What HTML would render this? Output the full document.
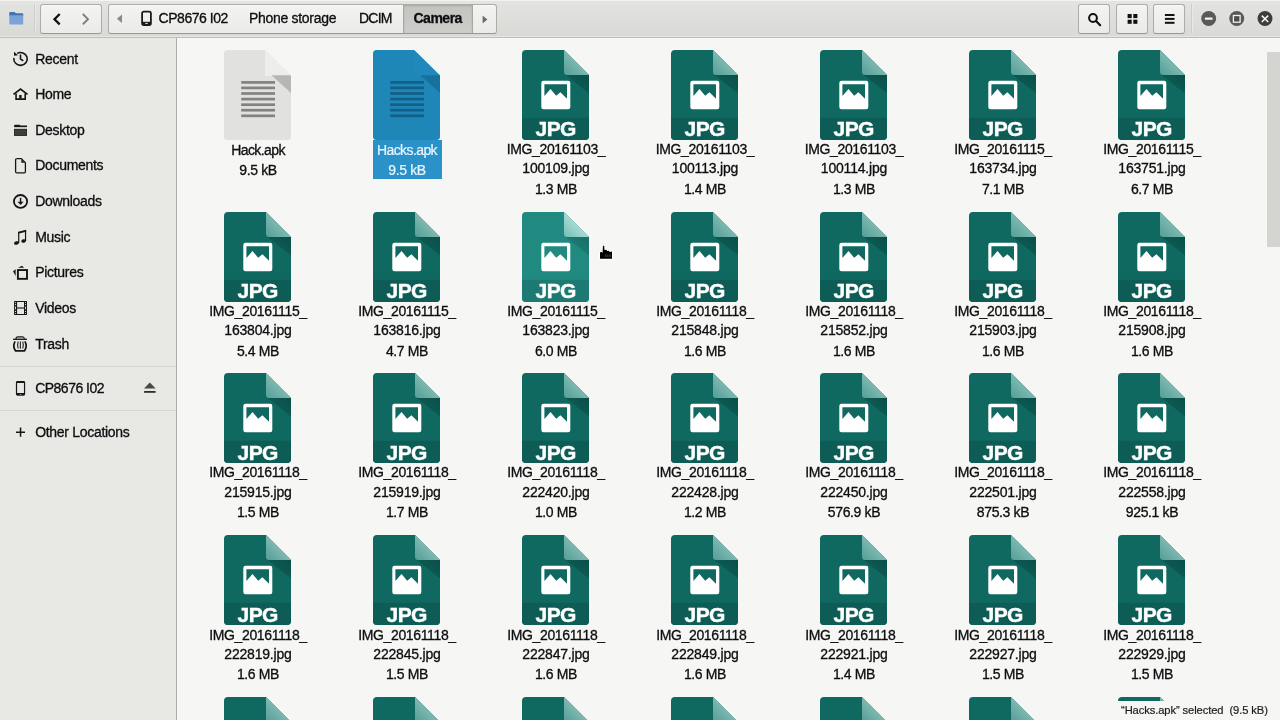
<!DOCTYPE html>
<html lang="en">
<head>
<meta charset="utf-8">
<title>Camera</title>
<style>
html,body{margin:0;padding:0;}
body{width:1280px;height:720px;overflow:hidden;background:#f6f6f4;font-family:"Liberation Sans","DejaVu Sans",sans-serif;color:#1c1c1c;}
#win{will-change:transform;position:relative;width:1280px;height:720px;overflow:hidden;}
#header{position:absolute;left:0;top:0;width:1280px;height:37px;background:linear-gradient(#e4e5e2,#dededc 50%,#d9d9d5);border-bottom:1px solid #bdbdb9;box-shadow:inset 0 1px 0 #f3f3f1, inset 0 -1px 0 #e6e6e3;}
.hbtn{position:absolute;top:4px;height:28px;border:1px solid #adada8;border-bottom-color:#989893;box-shadow:inset 0 1px 0 #fafaf9;border-radius:3px;background:linear-gradient(#f3f3f1,#ebebe9);box-sizing:content-box;}
.hsep{position:absolute;top:4px;height:29px;width:1px;background:#cdcdc9;box-shadow:1px 0 0 #e9e9e7;}
.ptxt{position:absolute;top:-1px;height:28px;line-height:28px;font-size:14px;letter-spacing:-0.3px;color:#2e3436;white-space:nowrap;}
#sidebar{position:absolute;left:0;top:38px;width:176px;height:682px;background:#e8e8e4;border-right:1px solid #adada9;}
.srow{position:absolute;left:0;width:176px;height:24px;margin-top:-38px;}
.sic{position:absolute;left:13px;top:4.500px;width:15px;height:15px;display:block;}
.sic svg{display:block;}
.slb{position:absolute;left:35.200px;top:0;height:24px;line-height:24px;font-size:14px;letter-spacing:-0.3px;color:#1e2224;white-space:nowrap;}
.eject{position:absolute;left:142px;top:4.500px;width:15px;height:15px;}
.eject svg{display:block;}
.ssep{position:absolute;left:0;width:176px;height:1px;background:#d5d5d1;margin-top:-38px;}
#content{position:absolute;left:177px;top:38px;width:1103px;height:682px;background:#f6f6f4;overflow:hidden;}
.item{position:absolute;width:150px;margin-left:-177px;margin-top:-38px;}
.ico{position:relative;width:67px;height:90px;margin:0 auto;left:-0.300px;}
.ico svg{display:block;}
.ext{position:absolute;left:0;width:67px;text-align:center;top:68.500px;font-size:21px;line-height:21px;font-weight:bold;color:#fdfffe;letter-spacing:-0.6px;-webkit-text-stroke:0.4px #fdfffe;}
.lab{position:absolute;top:0;left:0;width:150px;height:0;text-align:center;font-size:14px;line-height:16px;letter-spacing:-0.36px;color:#141617;}
.lab span{position:absolute;left:0;width:150px;display:block;white-space:nowrap;height:16px;}
.lab span.l2{letter-spacing:-0.2px;}

.docsel .lab{color:#e9f6ff;}
.docsel .hl{position:absolute;left:41px;top:90.300px;width:69px;height:39px;background:#2a92c8;}
.doc .lab span:first-child,.docsel .lab span:first-child{letter-spacing:-0.6px;}

#sbar{position:absolute;left:1090px;top:14px;width:13px;height:195.300px;background:#d4d4d0;}
#cursor{position:absolute;left:419px;top:204px;}
#status{position:absolute;right:0;bottom:0;width:163px;height:19px;background:#f6f6f4;font-size:11.200px;line-height:19px;text-align:left;text-indent:4px;letter-spacing:-0.1px;color:#1c1e1f;white-space:nowrap;}
.lab,.slb,.ptxt{-webkit-text-stroke:0.3px currentColor;color:#0c0e0f;}
.docsel .lab{-webkit-text-stroke:0.2px currentColor;color:#eaf6ff;}
#status{-webkit-text-stroke:0.2px currentColor;}

</style>
</head>
<body>
<svg width="0" height="0" style="position:absolute">
<defs>
<linearGradient id="ijpgfg" x1="0" y1="1" x2="1" y2="0"><stop offset="0" stop-color="#549e96"/><stop offset="0.5" stop-color="#7cb8b0"/></linearGradient>
<linearGradient id="ijpgsg" gradientUnits="userSpaceOnUse" x1="67" y1="25" x2="57.5" y2="37"><stop offset="0" stop-color="#0a4f49" stop-opacity="1"/><stop offset="1" stop-color="#0a4f49" stop-opacity="0.6"/></linearGradient>
<clipPath id="ijpgcp"><path d="M4 0 H42 L67 25 V86 Q67 90 63 90 H4 Q0 90 0 86 V4 Q0 0 4 0 Z"/></clipPath>
<symbol id="ijpg" viewBox="0 0 67 90">
<g clip-path="url(#ijpgcp)">
<rect x="0" y="0" width="67" height="90" fill="#106960"/>
<rect x="0" y="67.800" width="67" height="22.200" fill="#0d5c55"/>
<path d="M43.500 25 H67 V43.500 Z" fill="url(#ijpgsg)"/>
<path d="M42 0 V22 Q42 25 45 25 H67 Z" fill="url(#ijpgfg)"/>
</g>
<rect x="19.300" y="30.700" width="29" height="28.600" rx="2.200" fill="#fff"/>
<path d="M22.400 34.300 H45 V48.700 L38.400 42.300 L34.200 45.800 L28.500 39 L22.400 46 Z" fill="#106960"/>
</symbol><linearGradient id="ijpghfg" x1="0" y1="1" x2="1" y2="0"><stop offset="0" stop-color="#74bcb4"/><stop offset="0.5" stop-color="#a4dcd4"/></linearGradient>
<linearGradient id="ijpghsg" gradientUnits="userSpaceOnUse" x1="67" y1="25" x2="57.5" y2="37"><stop offset="0" stop-color="#176f68" stop-opacity="1"/><stop offset="1" stop-color="#176f68" stop-opacity="0.6"/></linearGradient>
<clipPath id="ijpghcp"><path d="M4 0 H42 L67 25 V86 Q67 90 63 90 H4 Q0 90 0 86 V4 Q0 0 4 0 Z"/></clipPath>
<symbol id="ijpgh" viewBox="0 0 67 90">
<g clip-path="url(#ijpghcp)">
<rect x="0" y="0" width="67" height="90" fill="#218a80"/>
<rect x="0" y="67.800" width="67" height="22.200" fill="#1d7a72"/>
<path d="M43.500 25 H67 V43.500 Z" fill="url(#ijpghsg)"/>
<path d="M42 0 V22 Q42 25 45 25 H67 Z" fill="url(#ijpghfg)"/>
</g>
<rect x="19.300" y="30.700" width="29" height="28.600" rx="2.200" fill="#fff"/>
<path d="M22.400 34.300 H45 V48.700 L38.400 42.300 L34.200 45.800 L28.500 39 L22.400 46 Z" fill="#218a80"/>
</symbol><clipPath id="idoccp"><path d="M3.500 0 H41 L67 25.500 V86.500 Q67 90 63.500 90 H3.500 Q0 90 0 86.500 V3.500 Q0 0 3.500 0 Z"/></clipPath>
<symbol id="idoc" viewBox="0 0 67 90">
<g clip-path="url(#idoccp)">
<rect x="0" y="0" width="67" height="90" fill="#e1e1df"/>
<path d="M41 0 H42 L67 25 V26 H41 Z" fill="#ededeb"/>
<path d="M47.500 25.200 H67 V43 Z" fill="#b6b6b4"/>
</g>
<rect x="17.200" y="31.05" width="33.800" height="2.700" fill="#82827e"/><rect x="17.200" y="36.55" width="33.800" height="2.700" fill="#82827e"/><rect x="17.200" y="42.15" width="33.800" height="2.700" fill="#82827e"/><rect x="17.200" y="47.75" width="33.800" height="2.700" fill="#82827e"/><rect x="17.200" y="53.35" width="33.800" height="2.700" fill="#82827e"/><rect x="17.200" y="58.85" width="33.800" height="2.700" fill="#82827e"/><rect x="17.200" y="64.45" width="33.800" height="2.700" fill="#82827e"/>
</symbol><clipPath id="idocscp"><path d="M3.500 0 H41 L67 25.500 V86.500 Q67 90 63.500 90 H3.500 Q0 90 0 86.500 V3.500 Q0 0 3.500 0 Z"/></clipPath>
<symbol id="idocs" viewBox="0 0 67 90">
<g clip-path="url(#idocscp)">
<rect x="0" y="0" width="67" height="90" fill="#1f86b8"/>
<path d="M41 0 H42 L67 25 V26 H41 Z" fill="#2088bb"/>
<path d="M47.500 25.200 H67 V43 Z" fill="#18709c"/>
</g>
<rect x="17.200" y="31.05" width="33.800" height="2.700" fill="#135f88"/><rect x="17.200" y="36.55" width="33.800" height="2.700" fill="#135f88"/><rect x="17.200" y="42.15" width="33.800" height="2.700" fill="#135f88"/><rect x="17.200" y="47.75" width="33.800" height="2.700" fill="#135f88"/><rect x="17.200" y="53.35" width="33.800" height="2.700" fill="#135f88"/><rect x="17.200" y="58.85" width="33.800" height="2.700" fill="#135f88"/><rect x="17.200" y="64.45" width="33.800" height="2.700" fill="#135f88"/>
</symbol>
</defs>
</svg>
<div id="win">
<div id="header">
<div style="position:absolute;left:9px;top:11px;width:15px;height:15px"><svg width="15" height="15" viewBox="0 0 15 15"><path d="M0.300 1.800 Q0.300 1 1.100 1 H5.600 L6.800 2.200 H13.400 Q14.200 2.200 14.200 3 V5 H0.300 Z" fill="#4471b0"/><rect x="0.300" y="4" width="13.900" height="9.600" rx="0.800" fill="#7aa4d8"/><rect x="0.300" y="4" width="13.900" height="1.200" fill="#6a96cf"/></svg></div>
<div class="hsep" style="left:34px"></div>
<div class="hbtn" style="left:40px;width:60px">
<svg width="60" height="28" viewBox="0 0 60 28" style="display:block"><path d="M18.700 9 L13.500 14.200 L18.700 19.400" fill="none" stroke="#111" stroke-width="2.300"/><path d="M41.800 9 L47 14.200 L41.800 19.400" fill="none" stroke="#7c7e7c" stroke-width="1.900"/></svg>
</div>
<div class="hbtn" style="left:108px;width:387px;overflow:hidden">
<svg width="20" height="28" viewBox="0 0 20 28" style="position:absolute;left:0;top:0"><path d="M13 9.400 V18.100 L7.800 13.750 Z" fill="#8a8c8a"/></svg>
<svg width="15" height="17" viewBox="0 0 15 17" style="position:absolute;left:29.800px;top:4.600px"><rect x="3.100" y="1.600" width="8.800" height="13.400" rx="1.800" fill="none" stroke="#1a1a1a" stroke-width="1.800"/><rect x="3.100" y="11.800" width="8.800" height="3.200" fill="#1a1a1a"/><rect x="6.300" y="12.900" width="2.400" height="1" fill="#eee"/></svg>
<span class="ptxt" style="left:49.500px;letter-spacing:-0.45px">CP8676 I02</span>
<span class="ptxt" style="left:140px">Phone storage</span>
<span class="ptxt" style="left:250px;letter-spacing:-0.75px">DCIM</span>
<div style="position:absolute;left:294px;top:0;width:68px;height:28px;background:linear-gradient(#c3c3bf,#cdcdc9);border-left:1px solid #a8a8a2;border-right:1px solid #a8a8a2;box-shadow:inset 0 1px 2px rgba(0,0,0,0.14)"></div>
<span class="ptxt" style="left:304.500px;font-weight:bold;letter-spacing:-0.5px">Camera</span>
<svg width="20" height="28" viewBox="0 0 20 28" style="position:absolute;left:366px;top:0"><path d="M7.600 10.500 V18.500 L12.400 14.500 Z" fill="#6a6c6a"/></svg>
</div>
<div class="hbtn" style="left:1078px;width:30px"><svg width="29" height="28" viewBox="0 0 29 28" style="display:block;margin-left:1px"><circle cx="13" cy="13" r="3.900" fill="none" stroke="#111" stroke-width="2"/><path d="M16 16 L20.200 20.200" stroke="#111" stroke-width="2.200" stroke-linecap="round"/></svg></div>
<div class="hbtn" style="left:1116px;width:30px"><svg width="29" height="28" viewBox="0 0 29 28" style="display:block;margin-left:1px"><rect x="9.600" y="9" width="4.100" height="4.100" fill="#111"/><rect x="15.300" y="9" width="4.100" height="4.100" fill="#111"/><rect x="9.600" y="14.700" width="4.100" height="4.100" fill="#111"/><rect x="15.300" y="14.700" width="4.100" height="4.100" fill="#111"/></svg></div>
<div class="hbtn" style="left:1153px;width:30px"><svg width="29" height="28" viewBox="0 0 29 28" style="display:block;margin-left:1px"><rect x="9.900" y="9" width="9.600" height="2" fill="#111"/><rect x="9.900" y="12.900" width="9.600" height="2" fill="#111"/><rect x="9.900" y="16.800" width="9.600" height="2" fill="#111"/></svg></div>
<div class="hsep" style="left:1191px"></div>
<svg width="90" height="36" viewBox="0 0 90 36" style="position:absolute;left:1190px;top:0">
<circle cx="18.700" cy="18.500" r="7.450" fill="#585a58"/><rect x="14.900" y="17.500" width="7.700" height="2.300" rx="0.500" fill="#f2f2f2"/>
<circle cx="46.750" cy="18.500" r="7.450" fill="#585a58"/><rect x="43.400" y="15.500" width="6.700" height="6.700" fill="#4c4e4c" stroke="#f2f2f2" stroke-width="1.300"/>
<circle cx="75" cy="18.500" r="7.450" fill="#3c3e3c"/><path d="M71.800 15.600 L78.200 22 M78.200 15.600 L71.800 22" stroke="#f6f6f6" stroke-width="1.500"/>
</svg>
</div>
<div id="sidebar">
<div class="srow" style="top:46.5px"><span class="slb">Recent</span></div>
<div class="srow" style="top:82.1px"><span class="slb">Home</span></div>
<div class="srow" style="top:117.8px"><span class="slb">Desktop</span></div>
<div class="srow" style="top:153.4px"><span class="slb">Documents</span></div>
<div class="srow" style="top:189.0px"><span class="slb">Downloads</span></div>
<div class="srow" style="top:224.7px"><span class="slb">Music</span></div>
<div class="srow" style="top:260.3px"><span class="slb">Pictures</span></div>
<div class="srow" style="top:295.9px"><span class="slb">Videos</span></div>
<div class="srow" style="top:331.6px"><span class="slb">Trash</span></div>
<div class="srow" style="top:375.7px"><span class="slb" style="letter-spacing:-0.52px">CP8676 I02</span></div>
<div class="srow" style="top:419.8px"><span class="slb">Other Locations</span></div>
<div class="ssep" style="top:365.5px"></div>
<div class="ssep" style="top:409.8px"></div>
</div>
<div id="content">
<div class="item doc" style="left:183px;top:49.7px"><div class="ico"><svg width="67" height="90" viewBox="0 0 67 90"><use href="#idoc"/></svg></div><div class="lab"><span class="ln" style="top:92.3px">Hack.apk</span><span class="ln sz" style="top:112.3px">9.5 kB</span></div></div>
<div class="item docsel" style="left:332px;top:49.7px"><div class="hl"></div><div class="ico"><svg width="67" height="90" viewBox="0 0 67 90"><use href="#idocs"/></svg></div><div class="lab"><span class="ln" style="top:92.3px">Hacks.apk</span><span class="ln sz" style="top:112.3px">9.5 kB</span></div></div>
<div class="item jpg" style="left:481px;top:49.7px"><div class="ico"><svg width="67" height="90" viewBox="0 0 67 90"><use href="#ijpg"/></svg><span class="ext">JPG</span></div><div class="lab"><span class="ln" style="top:91.3px">IMG_20161103_</span><span class="ln l2" style="top:110.3px">100109.jpg</span><span class="ln sz" style="top:131.3px">1.3 MB</span></div></div>
<div class="item jpg" style="left:630px;top:49.7px"><div class="ico"><svg width="67" height="90" viewBox="0 0 67 90"><use href="#ijpg"/></svg><span class="ext">JPG</span></div><div class="lab"><span class="ln" style="top:91.3px">IMG_20161103_</span><span class="ln l2" style="top:110.3px">100113.jpg</span><span class="ln sz" style="top:131.3px">1.4 MB</span></div></div>
<div class="item jpg" style="left:779px;top:49.7px"><div class="ico"><svg width="67" height="90" viewBox="0 0 67 90"><use href="#ijpg"/></svg><span class="ext">JPG</span></div><div class="lab"><span class="ln" style="top:91.3px">IMG_20161103_</span><span class="ln l2" style="top:110.3px">100114.jpg</span><span class="ln sz" style="top:131.3px">1.3 MB</span></div></div>
<div class="item jpg" style="left:928px;top:49.7px"><div class="ico"><svg width="67" height="90" viewBox="0 0 67 90"><use href="#ijpg"/></svg><span class="ext">JPG</span></div><div class="lab"><span class="ln" style="top:91.3px">IMG_20161115_</span><span class="ln l2" style="top:110.3px">163734.jpg</span><span class="ln sz" style="top:131.3px">7.1 MB</span></div></div>
<div class="item jpg" style="left:1077px;top:49.7px"><div class="ico"><svg width="67" height="90" viewBox="0 0 67 90"><use href="#ijpg"/></svg><span class="ext">JPG</span></div><div class="lab"><span class="ln" style="top:91.3px">IMG_20161115_</span><span class="ln l2" style="top:110.3px">163751.jpg</span><span class="ln sz" style="top:131.3px">6.7 MB</span></div></div>
<div class="item jpg" style="left:183px;top:211.6px"><div class="ico"><svg width="67" height="90" viewBox="0 0 67 90"><use href="#ijpg"/></svg><span class="ext">JPG</span></div><div class="lab"><span class="ln" style="top:91.4px">IMG_20161115_</span><span class="ln l2" style="top:110.4px">163804.jpg</span><span class="ln sz" style="top:131.4px">5.4 MB</span></div></div>
<div class="item jpg" style="left:332px;top:211.6px"><div class="ico"><svg width="67" height="90" viewBox="0 0 67 90"><use href="#ijpg"/></svg><span class="ext">JPG</span></div><div class="lab"><span class="ln" style="top:91.4px">IMG_20161115_</span><span class="ln l2" style="top:110.4px">163816.jpg</span><span class="ln sz" style="top:131.4px">4.7 MB</span></div></div>
<div class="item jpghover" style="left:481px;top:211.6px"><div class="ico"><svg width="67" height="90" viewBox="0 0 67 90"><use href="#ijpgh"/></svg><span class="ext">JPG</span></div><div class="lab"><span class="ln" style="top:91.4px">IMG_20161115_</span><span class="ln l2" style="top:110.4px">163823.jpg</span><span class="ln sz" style="top:131.4px">6.0 MB</span></div></div>
<div class="item jpg" style="left:630px;top:211.6px"><div class="ico"><svg width="67" height="90" viewBox="0 0 67 90"><use href="#ijpg"/></svg><span class="ext">JPG</span></div><div class="lab"><span class="ln" style="top:91.4px">IMG_20161118_</span><span class="ln l2" style="top:110.4px">215848.jpg</span><span class="ln sz" style="top:131.4px">1.6 MB</span></div></div>
<div class="item jpg" style="left:779px;top:211.6px"><div class="ico"><svg width="67" height="90" viewBox="0 0 67 90"><use href="#ijpg"/></svg><span class="ext">JPG</span></div><div class="lab"><span class="ln" style="top:91.4px">IMG_20161118_</span><span class="ln l2" style="top:110.4px">215852.jpg</span><span class="ln sz" style="top:131.4px">1.6 MB</span></div></div>
<div class="item jpg" style="left:928px;top:211.6px"><div class="ico"><svg width="67" height="90" viewBox="0 0 67 90"><use href="#ijpg"/></svg><span class="ext">JPG</span></div><div class="lab"><span class="ln" style="top:91.4px">IMG_20161118_</span><span class="ln l2" style="top:110.4px">215903.jpg</span><span class="ln sz" style="top:131.4px">1.6 MB</span></div></div>
<div class="item jpg" style="left:1077px;top:211.6px"><div class="ico"><svg width="67" height="90" viewBox="0 0 67 90"><use href="#ijpg"/></svg><span class="ext">JPG</span></div><div class="lab"><span class="ln" style="top:91.4px">IMG_20161118_</span><span class="ln l2" style="top:110.4px">215908.jpg</span><span class="ln sz" style="top:131.4px">1.6 MB</span></div></div>
<div class="item jpg" style="left:183px;top:373.0px"><div class="ico"><svg width="67" height="90" viewBox="0 0 67 90"><use href="#ijpg"/></svg><span class="ext">JPG</span></div><div class="lab"><span class="ln" style="top:91.0px">IMG_20161118_</span><span class="ln l2" style="top:111.0px">215915.jpg</span><span class="ln sz" style="top:131.0px">1.5 MB</span></div></div>
<div class="item jpg" style="left:332px;top:373.0px"><div class="ico"><svg width="67" height="90" viewBox="0 0 67 90"><use href="#ijpg"/></svg><span class="ext">JPG</span></div><div class="lab"><span class="ln" style="top:91.0px">IMG_20161118_</span><span class="ln l2" style="top:111.0px">215919.jpg</span><span class="ln sz" style="top:131.0px">1.7 MB</span></div></div>
<div class="item jpg" style="left:481px;top:373.0px"><div class="ico"><svg width="67" height="90" viewBox="0 0 67 90"><use href="#ijpg"/></svg><span class="ext">JPG</span></div><div class="lab"><span class="ln" style="top:91.0px">IMG_20161118_</span><span class="ln l2" style="top:111.0px">222420.jpg</span><span class="ln sz" style="top:131.0px">1.0 MB</span></div></div>
<div class="item jpg" style="left:630px;top:373.0px"><div class="ico"><svg width="67" height="90" viewBox="0 0 67 90"><use href="#ijpg"/></svg><span class="ext">JPG</span></div><div class="lab"><span class="ln" style="top:91.0px">IMG_20161118_</span><span class="ln l2" style="top:111.0px">222428.jpg</span><span class="ln sz" style="top:131.0px">1.2 MB</span></div></div>
<div class="item jpg" style="left:779px;top:373.0px"><div class="ico"><svg width="67" height="90" viewBox="0 0 67 90"><use href="#ijpg"/></svg><span class="ext">JPG</span></div><div class="lab"><span class="ln" style="top:91.0px">IMG_20161118_</span><span class="ln l2" style="top:111.0px">222450.jpg</span><span class="ln sz" style="top:131.0px">576.9 kB</span></div></div>
<div class="item jpg" style="left:928px;top:373.0px"><div class="ico"><svg width="67" height="90" viewBox="0 0 67 90"><use href="#ijpg"/></svg><span class="ext">JPG</span></div><div class="lab"><span class="ln" style="top:91.0px">IMG_20161118_</span><span class="ln l2" style="top:111.0px">222501.jpg</span><span class="ln sz" style="top:131.0px">875.3 kB</span></div></div>
<div class="item jpg" style="left:1077px;top:373.0px"><div class="ico"><svg width="67" height="90" viewBox="0 0 67 90"><use href="#ijpg"/></svg><span class="ext">JPG</span></div><div class="lab"><span class="ln" style="top:91.0px">IMG_20161118_</span><span class="ln l2" style="top:111.0px">222558.jpg</span><span class="ln sz" style="top:131.0px">925.1 kB</span></div></div>
<div class="item jpg" style="left:183px;top:535.0px"><div class="ico"><svg width="67" height="90" viewBox="0 0 67 90"><use href="#ijpg"/></svg><span class="ext">JPG</span></div><div class="lab"><span class="ln" style="top:92.0px">IMG_20161118_</span><span class="ln l2" style="top:111.0px">222819.jpg</span><span class="ln sz" style="top:131.0px">1.6 MB</span></div></div>
<div class="item jpg" style="left:332px;top:535.0px"><div class="ico"><svg width="67" height="90" viewBox="0 0 67 90"><use href="#ijpg"/></svg><span class="ext">JPG</span></div><div class="lab"><span class="ln" style="top:92.0px">IMG_20161118_</span><span class="ln l2" style="top:111.0px">222845.jpg</span><span class="ln sz" style="top:131.0px">1.5 MB</span></div></div>
<div class="item jpg" style="left:481px;top:535.0px"><div class="ico"><svg width="67" height="90" viewBox="0 0 67 90"><use href="#ijpg"/></svg><span class="ext">JPG</span></div><div class="lab"><span class="ln" style="top:92.0px">IMG_20161118_</span><span class="ln l2" style="top:111.0px">222847.jpg</span><span class="ln sz" style="top:131.0px">1.6 MB</span></div></div>
<div class="item jpg" style="left:630px;top:535.0px"><div class="ico"><svg width="67" height="90" viewBox="0 0 67 90"><use href="#ijpg"/></svg><span class="ext">JPG</span></div><div class="lab"><span class="ln" style="top:92.0px">IMG_20161118_</span><span class="ln l2" style="top:111.0px">222849.jpg</span><span class="ln sz" style="top:131.0px">1.6 MB</span></div></div>
<div class="item jpg" style="left:779px;top:535.0px"><div class="ico"><svg width="67" height="90" viewBox="0 0 67 90"><use href="#ijpg"/></svg><span class="ext">JPG</span></div><div class="lab"><span class="ln" style="top:92.0px">IMG_20161118_</span><span class="ln l2" style="top:111.0px">222921.jpg</span><span class="ln sz" style="top:131.0px">1.4 MB</span></div></div>
<div class="item jpg" style="left:928px;top:535.0px"><div class="ico"><svg width="67" height="90" viewBox="0 0 67 90"><use href="#ijpg"/></svg><span class="ext">JPG</span></div><div class="lab"><span class="ln" style="top:92.0px">IMG_20161118_</span><span class="ln l2" style="top:111.0px">222927.jpg</span><span class="ln sz" style="top:131.0px">1.5 MB</span></div></div>
<div class="item jpg" style="left:1077px;top:535.0px"><div class="ico"><svg width="67" height="90" viewBox="0 0 67 90"><use href="#ijpg"/></svg><span class="ext">JPG</span></div><div class="lab"><span class="ln" style="top:92.0px">IMG_20161118_</span><span class="ln l2" style="top:111.0px">222929.jpg</span><span class="ln sz" style="top:131.0px">1.5 MB</span></div></div>
<div class="item jpg" style="left:183px;top:696.6px"><div class="ico"><svg width="67" height="90" viewBox="0 0 67 90"><use href="#ijpg"/></svg><span class="ext">JPG</span></div><div class="lab"><span class="ln" style="top:91.4px">IMG_20161118_</span><span class="ln l2" style="top:110.4px">222933.jpg</span><span class="ln sz" style="top:131.4px">1.5 MB</span></div></div>
<div class="item jpg" style="left:332px;top:696.6px"><div class="ico"><svg width="67" height="90" viewBox="0 0 67 90"><use href="#ijpg"/></svg><span class="ext">JPG</span></div><div class="lab"><span class="ln" style="top:91.4px">IMG_20161118_</span><span class="ln l2" style="top:110.4px">222938.jpg</span><span class="ln sz" style="top:131.4px">1.6 MB</span></div></div>
<div class="item jpg" style="left:481px;top:696.6px"><div class="ico"><svg width="67" height="90" viewBox="0 0 67 90"><use href="#ijpg"/></svg><span class="ext">JPG</span></div><div class="lab"><span class="ln" style="top:91.4px">IMG_20161118_</span><span class="ln l2" style="top:110.4px">222941.jpg</span><span class="ln sz" style="top:131.4px">1.4 MB</span></div></div>
<div class="item jpg" style="left:630px;top:696.6px"><div class="ico"><svg width="67" height="90" viewBox="0 0 67 90"><use href="#ijpg"/></svg><span class="ext">JPG</span></div><div class="lab"><span class="ln" style="top:91.4px">IMG_20161118_</span><span class="ln l2" style="top:110.4px">222946.jpg</span><span class="ln sz" style="top:131.4px">1.5 MB</span></div></div>
<div class="item jpg" style="left:779px;top:696.6px"><div class="ico"><svg width="67" height="90" viewBox="0 0 67 90"><use href="#ijpg"/></svg><span class="ext">JPG</span></div><div class="lab"><span class="ln" style="top:91.4px">IMG_20161118_</span><span class="ln l2" style="top:110.4px">222950.jpg</span><span class="ln sz" style="top:131.4px">1.6 MB</span></div></div>
<div class="item jpg" style="left:928px;top:696.6px"><div class="ico"><svg width="67" height="90" viewBox="0 0 67 90"><use href="#ijpg"/></svg><span class="ext">JPG</span></div><div class="lab"><span class="ln" style="top:91.4px">IMG_20161118_</span><span class="ln l2" style="top:110.4px">222954.jpg</span><span class="ln sz" style="top:131.4px">1.5 MB</span></div></div>
<div class="item jpg" style="left:1077px;top:696.6px"><div class="ico"><svg width="67" height="90" viewBox="0 0 67 90"><use href="#ijpg"/></svg><span class="ext">JPG</span></div><div class="lab"><span class="ln" style="top:91.4px">IMG_20161118_</span><span class="ln l2" style="top:110.4px">222958.jpg</span><span class="ln sz" style="top:131.4px">1.5 MB</span></div></div>
<div id="sbar"></div>
<div id="cursor"><svg width="20" height="22" viewBox="596 242 20 22"><path d="M600 258.800 V252.500 L601.800 251.800 L602.600 253 L602.900 245.800 H604.200 L604.500 250 L606.500 249.800 L607 251 L609 250.800 L609.500 252 L612 251.500 V258.800 Z" fill="#000" stroke="#fff" stroke-width="1.800" stroke-linejoin="round" paint-order="stroke"/><path d="M605.700 254.300 V257 M607.900 254.300 V257 M610.100 254.300 V257" stroke="#9a9a9a" stroke-width="0.500" fill="none"/></svg></div>
<div id="status">“Hacks.apk” selected&nbsp; (9.5 kB)</div>
</div>
<svg id="sideicons" width="176" height="720" viewBox="0 0 176 720" style="position:absolute;left:0;top:0;pointer-events:none">
<g fill="none" stroke="#161616">
<!-- recent -->
<path d="M17.200 53.400 A6.700 6.400 0 1 1 13.900 58" stroke-width="1.600"/>
<path d="M20.500 54.600 V59.100 L23.300 60.700" stroke-width="1.600"/>
<!-- home -->
<path d="M13.500 94.400 L20.500 89.100 L27.500 94.400" stroke-width="1.700"/>
<path d="M16.050 93.600 V99.100 H25.200 V93.600" stroke-width="1.600"/>
<!-- documents -->
<path d="M16.500 158.650 H21.300 L25.400 162.700 V171.800 Q25.400 172.950 24.300 172.950 H16.700 Q15.600 172.950 15.600 171.800 V159.800 Q15.600 158.650 16.700 158.650 Z" stroke-width="1.300"/>
<!-- downloads -->
<ellipse cx="20.540" cy="201.450" rx="6.600" ry="6.450" stroke-width="1.800"/>
<path d="M20.550 197.800 V202.400" stroke-width="1.500"/>
<!-- pictures -->
<rect x="17.900" y="270.050" width="9.100" height="8.800" stroke-width="1.900"/>
<!-- trash -->
<path d="M13.050 339.300 H27" stroke-width="1.300"/>
<path d="M15.900 338.900 Q16 337 17.600 337 H22.600 Q24.200 337 24.300 338.900" stroke-width="1.300"/>
<path d="M15.100 341.300 C13.300 344.500 13.600 348.300 15.600 350.900 H24.400 C26.400 348.300 26.700 344.500 24.900 341.300" stroke-width="1.700"/>
<path d="M18.200 341.500 Q16.900 345 18.200 348.500 M20.400 341.500 V348.700 M22.700 341.500 Q24 345 22.700 348.500" stroke-width="1.200" stroke="#333"/>
<!-- phone -->
<rect x="16.500" y="381.500" width="8.050" height="13.400" rx="1.600" stroke-width="1.200"/>
<!-- plus -->
<path d="M15.950 432.150 H25 M20.550 427.600 V436.750" stroke-width="1.500"/>
</g>
<g fill="#161616">
<path d="M14 51.700 V55.700 L18 55.300 Z"/>
<rect x="19.200" y="95" width="2.400" height="3.600"/>
<!-- desktop folder -->
<path d="M14.100 127 V125.500 L14.800 124.800 H19.600 L20.400 125.600 H27 V127 Z"/>
<rect x="14.100" y="127" width="12.900" height="2.100" fill="#c6c6c2"/>
<rect x="14.500" y="129.500" width="12.100" height="6" fill="#3e3e3a" stroke="#1a1a18" stroke-width="0.800"/>
<!-- documents fold -->
<path d="M21.300 159.600 V162.700 H24.600 Z"/>
<!-- downloads arrow head -->
<path d="M17.500 201.800 H23.600 L20.550 204.900 Z"/>
<!-- music -->
<path d="M18.100 231.800 L26.100 229.800 V231.800 L18.100 233.700 Z"/>
<rect x="18.100" y="232" width="1.200" height="11"/>
<rect x="24.950" y="230" width="1.200" height="11"/>
<ellipse cx="16.500" cy="243" rx="2.500" ry="1.750" transform="rotate(-15 16.500 243)"/>
<ellipse cx="23.600" cy="241" rx="2.300" ry="1.700" transform="rotate(-15 23.600 241)"/>
<!-- pictures triangles -->
<path d="M18.100 267.700 L21.900 265.800 L24.200 267.700 Z"/>
<path d="M15.600 269.300 L13.050 271.300 L15.600 276 Z"/>
<!-- videos -->
<path fill-rule="evenodd" d="M14.100 301 H27 V314.900 H14.100 Z M17.100 301.900 V307.100 H24 V301.900 Z M17.100 308.800 V314 H24 V308.800 Z"/>
<rect x="17.100" y="307.100" width="6.900" height="1.700" fill="#7a7a78"/>
<g fill="#e8e8e4"><circle cx="15.550" cy="302.600" r="0.550"/><circle cx="15.550" cy="304.600" r="0.550"/><rect x="15.100" y="306.300" width="0.900" height="3.200" rx="0.400"/><circle cx="15.550" cy="311.400" r="0.550"/><circle cx="15.550" cy="313.500" r="0.550"/>
<circle cx="25.550" cy="302.600" r="0.550"/><circle cx="25.550" cy="304.600" r="0.550"/><rect x="25.100" y="306.300" width="0.900" height="3.200" rx="0.400"/><circle cx="25.550" cy="311.400" r="0.550"/><circle cx="25.550" cy="313.500" r="0.550"/></g>
<!-- trash lid fill -->
<rect x="17" y="337.300" width="6.300" height="1.500" fill="#8a8a88"/>
<!-- phone bars -->
<path d="M16 382.900 V382.400 Q16 380.900 17.500 380.900 H23.600 Q25.100 380.900 25.100 382.400 V382.900 Z"/>
<path d="M16 393 V393.900 Q16 395.400 17.500 395.400 H23.600 Q25.100 395.400 25.100 393.900 V393 Z"/>
<rect x="19.800" y="394.100" width="1.500" height="0.600" fill="#e8e8e4"/>
<!-- eject -->
<path d="M149.800 382.500 L155.700 388.500 H144 Z" fill="#484846"/>
<rect x="144.100" y="391" width="11.500" height="1.800" fill="#2e2e2c"/>
</g>
</svg>
</div>
</body>
</html>
